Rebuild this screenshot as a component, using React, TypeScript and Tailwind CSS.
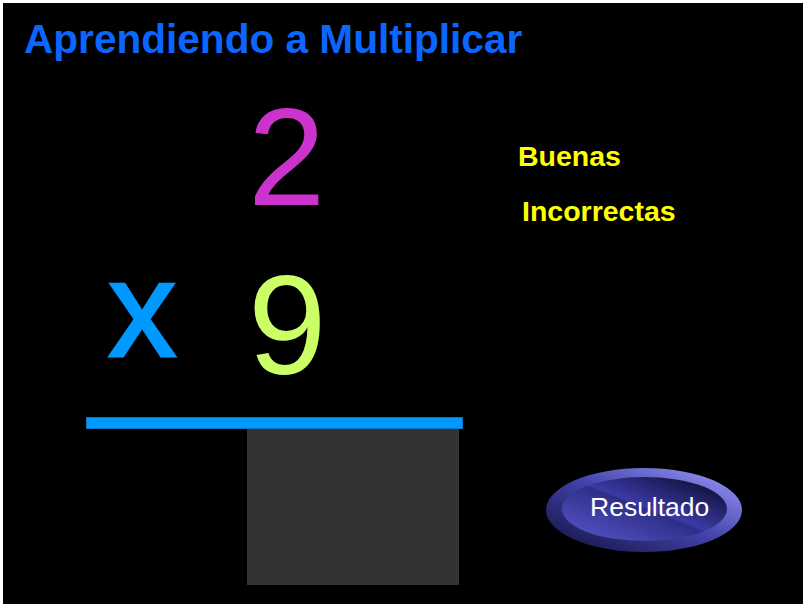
import React from "react";

function ResultButton() {
  return (
    <div className="relative w-[196px] h-[84px] cursor-pointer">
      <svg width="196" height="84" viewBox="0 0 196 84" className="absolute inset-0">
        <defs>
          <linearGradient id="outerG" x1="0" y1="1" x2="1" y2="0">
            <stop offset="0" stopColor="#10103a" />
            <stop offset="0.5" stopColor="#4040a8" />
            <stop offset="1" stopColor="#a0a0ff" />
          </linearGradient>
          <linearGradient id="innerG" x1="0" y1="1" x2="1" y2="0">
            <stop offset="0" stopColor="#5a5ad0" />
            <stop offset="0.5" stopColor="#2e2e88" />
            <stop offset="0.52" stopColor="#3a3aa6" />
            <stop offset="1" stopColor="#06061f" />
          </linearGradient>
        </defs>
        <ellipse cx="98" cy="42" rx="98" ry="42" fill="url(#outerG)" />
        <ellipse cx="98.5" cy="41" rx="82.5" ry="32" fill="url(#innerG)" />
      </svg>
      <span className="absolute left-[44px] top-[26px] text-[26.5px] leading-none text-white font-['Liberation_Sans',Arial,sans-serif] whitespace-nowrap">
        Resultado
      </span>
    </div>
  );
}

export default function App() {
  return (
    <div className="min-h-screen bg-white pt-[3px] pl-[3px] font-['Liberation_Sans',Arial,sans-serif]">
      <div className="w-[800px] h-[601px] bg-black overflow-hidden">
        <div className="pt-[16px] pl-[21px]">
          <h1 className="h-[40px] text-[40.6px] leading-[40px] font-bold text-[#0a66ff] whitespace-nowrap">
            Aprendiendo a Multiplicar
          </h1>
        </div>
        <div className="flex mt-[26.5px] pl-[83px]">
          <div className="w-[377px] flex flex-col">
            <div className="ml-[162px] h-[150px] text-[139px] leading-[142px] text-[#cc33cc]">2</div>
            <div className="mt-[18px] flex items-end pl-[21px] h-[150px]">
              <span className="ml-[1.5px] w-[139.5px] mb-[26.5px] text-[135px] leading-none text-[#0099ff] [-webkit-text-stroke:3px_#0099ff]">
                x
              </span>
              <span className="block h-[150px] text-[141px] leading-[142px] text-[#ccff66]">9</span>
            </div>
            <div className="mt-[13.5px] h-[12px] w-[377px] bg-[#0099ff] border border-[#0a74c8]" />
            <div className="ml-[161px] w-[212px] h-[156px] bg-[#333333]" />
          </div>
          <div className="ml-[55px] flex flex-col pt-[56.5px]">
            <div className="h-[28px] text-[28.5px] leading-[28px] font-bold text-[#ffff00] whitespace-nowrap">
              Buenas
            </div>
            <div className="mt-[27px] ml-[4px] h-[28px] text-[28.5px] leading-[28px] font-bold text-[#ffff00] whitespace-nowrap">
              Incorrectas
            </div>
            <div className="mt-[243px] ml-[28px]">
              <ResultButton />
            </div>
          </div>
        </div>
      </div>
    </div>
  );
}
